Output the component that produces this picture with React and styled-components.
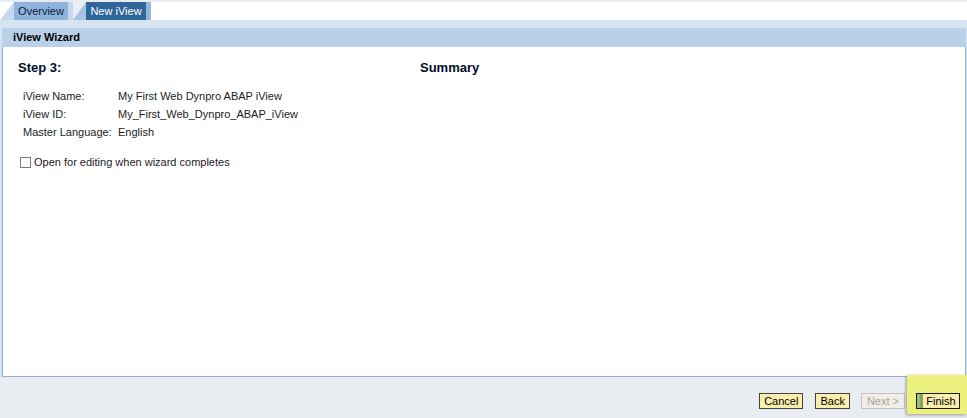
import React from "react";
import styled, { createGlobalStyle } from "styled-components";

const GlobalStyle = createGlobalStyle`
  html, body {
    margin: 0;
    padding: 0;
    background: #ffffff;
  }
  body {
    font-family: "Liberation Sans", Arial, sans-serif;
    font-size: 11px;
    color: #000;
  }
`;

const Page = styled.div`
  display: flex;
  flex-direction: column;
  width: 967px;
  height: 418px;
  overflow: hidden;
`;

const TopStrip = styled.div`
  height: 2px;
  background: #e9edf2;
`;

const TabBar = styled.div`
  display: flex;
  height: 18px;
  background: #ffffff;
`;

const Tab = styled.div`
  display: flex;
  height: 18px;
`;

const Slant = styled.div`
  width: 0;
  height: 0;
  border-bottom: 18px solid ${(p) => p.$color};
  border-left: ${(p) => p.$w}px solid ${(p) => p.$bg};
`;

const TabLabel = styled.div`
  display: flex;
  align-items: center;
  justify-content: center;
  width: ${(p) => p.$w}px;
  background: ${(p) => p.$bg};
  color: ${(p) => p.$fg};
  font-size: 11px;
  line-height: 18px;
`;

const TabEnd = styled.div`
  width: 5px;
  background: ${(p) => p.$color};
`;

const Frame = styled.div`
  flex: 1;
  display: flex;
  flex-direction: column;
  background: #d6e3f0;
  padding: 8px 1px 0 2px;
`;

const Header = styled.div`
  height: 19px;
  line-height: 19px;
  background: #b9d1e8;
  padding-left: 11px;
  font-weight: bold;
  font-size: 11px;
  color: #000;
`;

const Panel = styled.div`
  flex: 1;
  background: #ffffff;
  border-left: 1px solid #8fb3d8;
  border-right: 1px solid #8fb3d8;
  border-bottom: 1px solid #8fb3d8;
  padding: 13px 0 0 15px;
`;

const TitleRow = styled.div`
  display: grid;
  grid-template-columns: 402px auto;
  font-weight: bold;
  font-size: 13px;
  color: #000c26;
  height: 18px;
`;

const Fields = styled.div`
  display: grid;
  grid-template-columns: 95px auto;
  row-gap: 3px;
  margin: 11px 0 0 5px;
  color: #1c1c1c;
`;

const Cell = styled.div`
  height: 15px;
  line-height: 15px;
`;

const CheckRow = styled.label`
  display: flex;
  align-items: center;
  gap: 3px;
  margin: 16px 0 0 2px;
  color: #1c1c1c;
`;

const Box = styled.span`
  width: 11px;
  height: 11px;
  box-sizing: border-box;
  border: 1px solid #7a7a7a;
  background: #fff;
`;

const Footer = styled.div`
  height: 41px;
  display: flex;
  justify-content: flex-end;
  align-items: flex-start;
  background: #e9ecf0;
  margin: 0 -1px 0 -2px;
`;

const Button = styled.button`
  height: 16px;
  margin: 16px ${(p) => p.$gap}px 0 0;
  padding: 0 ${(p) => (p.$wide ? 5 : 4)}px;
  font-family: "Liberation Sans", Arial, sans-serif;
  font-size: 11px;
  line-height: 14px;
  border: 1px solid ${(p) => (p.disabled ? "#c3c3c3" : "#434343")};
  background: ${(p) => (p.disabled ? "#f1eee4" : "#f9eeae")};
  color: ${(p) => (p.disabled ? "#a3a3a3" : "#000")};
`;

const Highlight = styled.div`
  display: flex;
  align-items: flex-start;
  height: 39px;
  box-sizing: border-box;
  margin-top: -2px;
  background: #ecf07c;
  padding: 18px 7px 0 9px;
  box-shadow: -1px 1px 3px rgba(0, 0, 0, 0.35);
`;

const FinishButton = styled.button`
  display: flex;
  width: 44px;
  height: 16px;
  padding: 0;
  font-family: "Liberation Sans", Arial, sans-serif;
  font-size: 11px;
  line-height: 14px;
  border: 1px solid #1c1c1c;
  background: #f9eeae;
  color: #000;
`;

const Grip = styled.span`
  width: 6px;
  background: linear-gradient(to right, #9cbb78 0 3px, #7fa65c 3px);
`;

const FinishText = styled.span`
  flex: 1;
  text-align: center;
`;

const fields = [
  ["iView Name:", "My First Web Dynpro ABAP iView"],
  ["iView ID:", "My_First_Web_Dynpro_ABAP_iView"],
  ["Master Language:", "English"],
];

export default function App() {
  return (
    <Page>
      <GlobalStyle />
      <TopStrip />
      <TabBar>
        <Tab>
          <Slant $w={14} $color="#c6d9ed" $bg="#ffffff" />
          <TabLabel $bg="#8fb4db" $fg="#0b1a3a" $w={54}>
            Overview
          </TabLabel>
          <TabEnd $color="#c6d9ed" />
        </Tab>
        <Tab>
          <Slant $w={13} $color="#a6c3e3" $bg="#e6eef7" />
          <TabLabel $bg="#2f6699" $fg="#ffffff" $w={60}>
            New iView
          </TabLabel>
          <TabEnd $color="#93b7dc" />
        </Tab>
      </TabBar>
      <Frame>
        <Header>iView Wizard</Header>
        <Panel>
          <TitleRow>
            <span>Step 3:</span>
            <span>Summary</span>
          </TitleRow>
          <Fields>
            {fields.map(([label, value]) => (
              <React.Fragment key={label}>
                <Cell>{label}</Cell>
                <Cell>{value}</Cell>
              </React.Fragment>
            ))}
          </Fields>
          <CheckRow>
            <Box />
            Open for editing when wizard completes
          </CheckRow>
        </Panel>
        <Footer>
          <Button $gap={12}>Cancel</Button>
          <Button $gap={11}>Back</Button>
          <Button disabled $wide $gap={2}>
            Next &gt;
          </Button>
          <Highlight>
            <FinishButton>
              <Grip />
              <FinishText>Finish</FinishText>
            </FinishButton>
          </Highlight>
        </Footer>
      </Frame>
    </Page>
  );
}
